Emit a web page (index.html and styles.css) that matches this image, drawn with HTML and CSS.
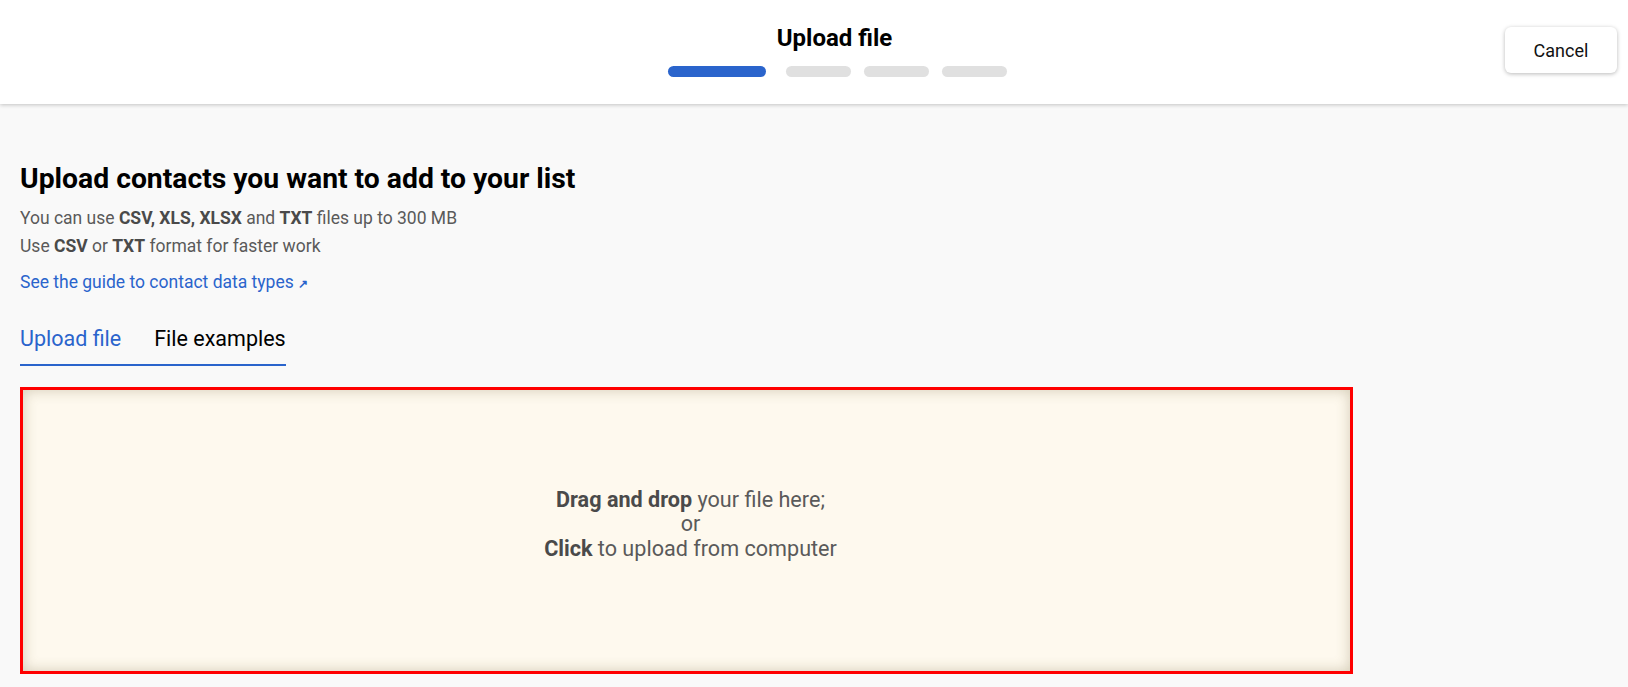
FILE: index.html
```html
<!DOCTYPE html>
<html lang="en">
<head>
<meta charset="utf-8">
<title>Upload file</title>
<link rel="stylesheet" href="styles.css">
</head>
<body>
<header class="topbar">
  <div class="topbar-side"></div>
  <div class="wizard">
    <h1 class="wizard-title">Upload file</h1>
    <div class="steps">
      <span class="step step-active"></span>
      <span class="step"></span>
      <span class="step"></span>
      <span class="step"></span>
    </div>
  </div>
  <div class="topbar-side topbar-actions">
    <button class="btn-cancel" type="button">Cancel</button>
  </div>
</header>
<main class="content">
  <h2 class="page-heading">Upload contacts you want to add to your list</h2>
  <p class="hint">You can use <b>CSV, XLS, XLSX</b> and <b>TXT</b> files up to 300 MB</p>
  <p class="hint">Use <b>CSV</b> or <b>TXT</b> format for faster work</p>
  <a class="guide-link" href="#">See the guide to contact data types <span class="ext">&#x2197;</span></a>
  <nav class="tabs">
    <a class="tab tab-active" href="#">Upload file</a>
    <a class="tab" href="#">File examples</a>
  </nav>
  <div class="dropzone">
    <div class="dropzone-text">
      <div><b>Drag and drop</b> your file here;</div>
      <div>or</div>
      <div><b>Click</b> to upload from computer</div>
    </div>
  </div>
</main>
</body>
</html>
```
FILE: styles.css
```css
* { box-sizing: border-box; }
html, body { margin: 0; padding: 0; }
body {
  font-family: Roboto, "Liberation Sans", Arial, sans-serif;
  background: #f9f9f9;
  color: #111;
  height: 687px;
  overflow: hidden;
}
.topbar {
  height: 104px;
  background: #fff;
  box-shadow: 0 1px 4px rgba(0,0,0,0.22);
  display: grid;
  grid-template-columns: 1fr auto 1fr;
  padding: 0 11px 0 52px;
  position: relative;
  z-index: 1;
}
.wizard {
  display: flex;
  flex-direction: column;
  align-items: center;
  padding-top: 23px;
}
.wizard-title {
  margin: 0;
  font-size: 24px;
  font-weight: 700;
  line-height: 30px;
  color: #000;
}
.steps {
  display: flex;
  margin-top: 13px;
  margin-left: 6px;
}
.step {
  width: 65px;
  height: 11px;
  border-radius: 6px;
  background: #e0e0e0;
  margin-left: 13px;
}
.step-active {
  width: 98px;
  background: #2a64cc;
  margin-left: 0;
  margin-right: 7px;
}
.topbar-actions {
  display: flex;
  justify-content: flex-end;
  align-items: flex-start;
  padding-top: 27px;
}
.btn-cancel {
  width: 112px;
  height: 46px;
  background: #fff;
  border: none;
  border-radius: 6px;
  box-shadow: 0 1px 4px rgba(0,0,0,0.28);
  font-family: inherit;
  font-size: 18px;
  color: #111;
}
.content {
  padding: 58px 20px 0 20px;
}
.page-heading {
  margin: 0 0 8px 0;
  font-size: 28.3px;
  font-weight: 700;
  line-height: 34px;
  color: #000;
}
.hint {
  margin: 0;
  font-size: 17.5px;
  line-height: 28px;
  color: #5a5a5a;
}
.hint b { color: #4a4a4a; }
.guide-link {
  display: block;
  width: max-content;
  margin-top: 8px;
  font-size: 17.5px;
  line-height: 28px;
  color: #2a64cc;
  text-decoration: none;
}
.ext { font-size: 12px; font-weight: 700; }
.tabs {
  display: flex;
  width: max-content;
  margin-top: 26px;
  border-bottom: 2px solid #2a64cc;
}
.tab {
  font-size: 21.5px;
  line-height: 30px;
  padding: 0 0 10px 0;
  color: #000;
  text-decoration: none;
  margin-right: 33px;
}
.tab:last-child { margin-right: 0; }
.tab-active {
  color: #2a64cc;
  box-shadow: inset 0 -2px 0 #2a64cc;
  margin-bottom: -2px;
  padding-bottom: 12px;
}
.dropzone {
  margin-top: 21px;
  width: 1333px;
  height: 287px;
  border: 3px solid #ff0000;
  background: #fef9ee;
  box-shadow: inset 0 0 14px rgba(110,95,50,0.3);
  display: flex;
  align-items: center;
  justify-content: center;
  padding: 0 0 12px 8px;
}
.dropzone-text {
  text-align: center;
  font-size: 21.6px;
  line-height: 24.5px;
  color: #5a5a5a;
}
.dropzone-text b { color: #4a4a4a; }
```
